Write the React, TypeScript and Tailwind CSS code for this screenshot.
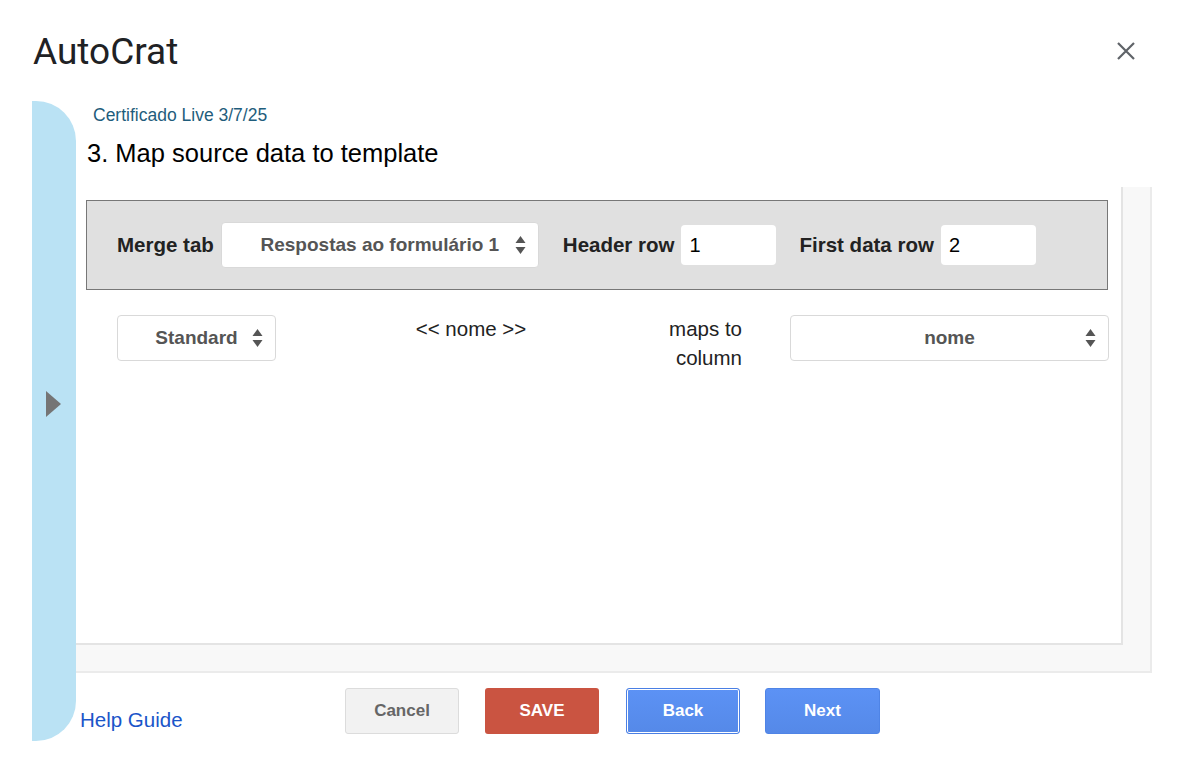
const Arrows = () => (
  <svg width="11" height="20" viewBox="0 0 11 20" className="absolute right-[12px] top-1/2 -translate-y-1/2">
    <path d="M5.5 1 L10.5 8 L0.5 8 Z" fill="#555" />
    <path d="M5.5 19 L10.5 12 L0.5 12 Z" fill="#555" />
  </svg>
);

const Select = ({ label, className }: { label: string; className: string }) => (
  <div
    className={`relative h-[46px] bg-white rounded-[4px] border border-[#d9d9d9] flex items-center justify-center text-[19px] font-bold text-[#555] ${className}`}
  >
    <span>{label}</span>
    <Arrows />
  </div>
);

export default function App() {
  return (
    <div
      className="w-[1182px] h-[774px] bg-white flex flex-col"
      style={{ fontFamily: '"Liberation Sans", Arial, sans-serif' }}
    >
      {/* header */}
      <div className="h-[101px] flex items-start justify-between pl-[33px] pr-[46px]">
        <h1
          className="pt-[30px] text-[37px] leading-[44px] text-[#202124]"
          style={{ fontFamily: 'Roboto, "Liberation Sans", sans-serif' }}
        >
          AutoCrat
        </h1>
        <svg width="20" height="20" viewBox="0 0 20 20" className="mt-[41px]">
          <path d="M2 2 L18 18 M18 2 L2 18" stroke="#5f6368" strokeWidth="2.2" />
        </svg>
      </div>

      <div className="flex h-[640px]">
        {/* sidebar */}
        <div className="ml-[32px] w-[44px] h-full bg-[#bae2f4] rounded-r-[40px] pt-[290px] pl-[14px]">
          <svg width="15" height="26" viewBox="0 0 15 26">
            <path d="M0 0 L15 13 L0 26 Z" fill="#757575" />
          </svg>
        </div>

        {/* main */}
        <div className="flex flex-col w-[1076px]">
          <p className="pl-[17px] pt-[4px] text-[17.5px] leading-[20px] text-[#1f5d7c]">
            Certificado Live 3/7/25
          </p>
          <h2 className="pl-[11px] mt-[14px] text-[25.5px] leading-[28px] text-black">
            3. Map source data to template
          </h2>

          {/* panel */}
          <div className="mt-[20px] h-[486px] bg-[#f8f8f8] border-r-2 border-b-2 border-[#ebebeb]">
            <div className="w-[1047px] h-[458px] bg-white border-r-2 border-b-2 border-[#e4e4e4] pt-[13px] pl-[10px]">
              <div className="w-[1022px] h-[90px] bg-[#e0e0e0] border border-[#777] flex items-center pl-[30px] text-[20.5px] font-bold text-[#222]">
                <span>Merge tab</span>
                <Select label="Respostas ao formulário 1" className="ml-[7px] w-[318px]" />
                <span className="ml-[24px]">Header row</span>
                <div className="ml-[7px] w-[95px] h-[40px] bg-white rounded-[4px] flex items-center pl-[8px] font-normal text-[20px] text-black">
                  1
                </div>
                <span className="ml-[23px]">First data row</span>
                <div className="ml-[7px] w-[95px] h-[40px] bg-white rounded-[4px] flex items-center pl-[8px] font-normal text-[20px] text-black">
                  2
                </div>
              </div>

              <div className="flex items-start mt-[25px] pl-[31px] text-[20.5px] text-[#222]">
                <Select label="Standard" className="w-[159px]" />
                <div className="w-[390px] text-center leading-[29px] -mt-[1px]">&lt;&lt; nome &gt;&gt;</div>
                <div className="w-[76px] text-right leading-[29px] -mt-[1px]">
                  maps to
                  <br />
                  column
                </div>
                <Select label="nome" className="ml-[48px] w-[319px]" />
              </div>
            </div>
          </div>

          {/* footer */}
          <div className="flex items-start pt-[15px]">
            <div className="w-[269px] pl-[4px] pt-[20px]">
              <a className="text-[20.5px] leading-[24px] text-[#1a55c9]">Help Guide</a>
            </div>
            <div className="flex text-[17px] font-bold">
              <button className="w-[114px] h-[46px] rounded-[3px] bg-[#f2f2f2] border border-[#dcdcdc] text-[#666]">
                Cancel
              </button>
              <button className="ml-[26px] w-[114px] h-[46px] rounded-[3px] bg-[#ca5441] text-white">SAVE</button>
              <button className="ml-[27px] w-[114px] h-[46px] rounded-[3px] bg-gradient-to-b from-[#5c92f5] to-[#5589e8] border border-[#4a7fe4] shadow-[inset_0_0_0_1px_#fff] text-white">
                Back
              </button>
              <button className="ml-[25px] w-[115px] h-[46px] rounded-[3px] bg-gradient-to-b from-[#5c92f5] to-[#5589e8] border border-[#4f84e6] text-white">
                Next
              </button>
            </div>
          </div>
        </div>
      </div>
    </div>
  );
}
